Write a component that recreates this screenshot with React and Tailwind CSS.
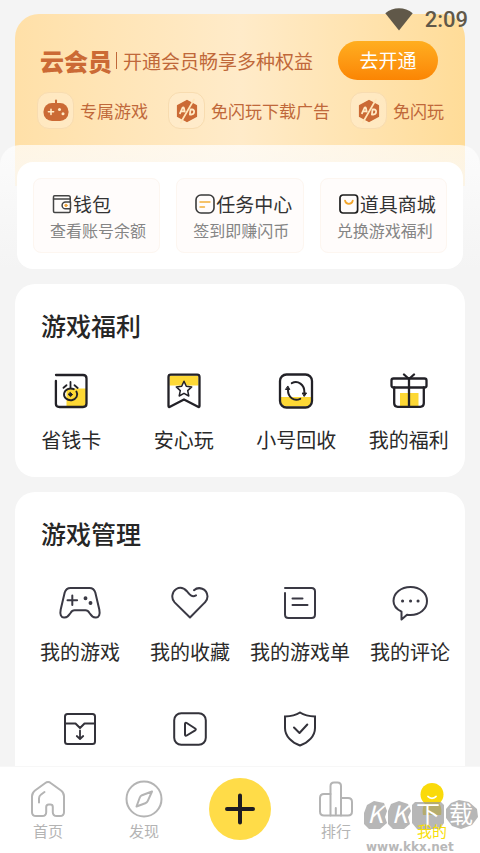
const CJK = "font-['Noto_Sans_CJK_SC',sans-serif]";

function Svg({ w, h, children, className = "", sw = 2 }) {
  return (
    <svg
      width={w}
      height={h}
      viewBox={`0 0 ${w} ${h}`}
      fill="none"
      stroke="currentColor"
      strokeWidth={sw}
      strokeLinecap="round"
      strokeLinejoin="round"
      aria-hidden="true"
      className={`block shrink-0 ${className}`}
    >
      {children}
    </svg>
  );
}

/* ---------- membership banner icons ---------- */

function PadSolid() {
  return (
    <Svg w={28} h={24} sw={1.6}>
      <path d="M14 1.5V5" stroke="#cb6a35" strokeWidth="2" />
      <rect x="1.5" y="4" width="25" height="18" rx="8.5" fill="#cb6a35" stroke="none" />
      <path d="M9 10.200v5.200M6.400 12.800h5.200" stroke="#ffe9c4" />
      <circle cx="17.500" cy="10.500" r="1.500" fill="#ffe9c4" stroke="none" />
      <circle cx="21" cy="14.800" r="1.500" fill="#ffe9c4" stroke="none" />
    </Svg>
  );
}

function NoAds() {
  return (
    <Svg w={24} h={26} sw={1.8}>
      <path
        d="M12 2.600 21.300 7.600v10.800L12 23.400 2.700 18.400V7.600z"
        fill="#cb6a35"
        stroke="#cb6a35"
        strokeWidth="1.600"
      />
      <path d="M5 15.300 7.400 10c.5-.9 1.200-.9 1.500 0l.8 3.600M6.200 13.400h3" stroke="#ffe9c4" />
      <path d="M15.500 11.500h1.500c3.200 0 2.600 5-.6 5h-1.500z" stroke="#ffe9c4" />
      <path d="M19 1.500 5.800 24.500" stroke="#ffe5b8" strokeWidth="1.700" />
    </Svg>
  );
}

/* ---------- shortcut icons ---------- */

function Wallet() {
  return (
    <Svg w={20} h={20} sw={1.5} className="text-[#444]">
      <path d="M18.200 8V3.500c0-1.200-.6-1.800-1.800-1.800H2.500c-.9 0-1 .5-1 1v14.500c0 .8.300 1.200 1.200 1.200h14.300c.8 0 1.200-.4 1.200-1.200V15" />
      <path d="M1.500 4.900h16.700M18.500 8h-5a3.300 3.300 0 0 0 0 6.800h5z" />
      <circle cx="14" cy="11.400" r="1.200" fill="#f0a53c" stroke="#f0a53c" strokeWidth="1" />
    </Svg>
  );
}

function Task() {
  return (
    <Svg w={20} h={20} sw={1.6} className="text-[#3a3a3a]">
      <rect x="1" y="1" width="18" height="18" rx="5" />
      <path d="M5 8h10M5 13h4.500" stroke="#f2ae3a" strokeWidth="1.400" />
    </Svg>
  );
}

function Bag() {
  return (
    <Svg w={20} h={20} sw={1.7} className="text-[#1d1d1d]">
      <rect x="1" y="1" width="17.600" height="18" rx="3" />
      <path d="M6 6.500c.8 4.500 7 4.500 7.800 0" stroke="#f2a52a" strokeWidth="1.700" />
    </Svg>
  );
}

/* ---------- welfare icons ---------- */

function SaveCard() {
  return (
    <Svg w={36} h={36} sw={2.3} className="text-[#222127]">
      <path d="M13.500 15.500H33v17.500H13.500z" fill="#fdd835" stroke="none" />
      <path d="M3 2h27c2.500 0 3.500 1 3.500 3.500v25c0 2.500-1 3.500-3.500 3.500H6.500C3.900 34 2.900 33 2.900 31V8" />
      <path d="M17.500 9v5.500M13.500 12.200l-3 2.600M21.500 12.200l3.200 2.800" strokeWidth="1.800" />
      <path d="M20.800 16.200a6.600 5.900 0 1 0 2.600 2.300" strokeWidth="1.900" />
      <path d="m17.500 19.600 2.100 2-2.100 2-2.100-2z" fill="currentColor" strokeWidth="1" />
    </Svg>
  );
}

function Bookmark() {
  return (
    <Svg w={36} h={36} sw={2.3} className="text-[#222127]">
      <path d="M3.500 2.500h29v10h-29z" fill="#fdd835" stroke="none" />
      <path d="M2.500 33V4c0-1.500.8-2.300 2.300-2.300h26.400c1.500 0 2.300.8 2.300 2.300v29c0 1-.8 1.200-1.500.8L18 26.500 4 33.800c-.8.400-1.500.1-1.500-.8z" />
      <path
        d="m18 8.300 2.300 5 5.400.6-4 3.700 1.100 5.400-4.800-2.700-4.800 2.700 1.100-5.400-4-3.700 5.400-.6z"
        fill="#fff"
        strokeWidth="1.500"
      />
    </Svg>
  );
}

function Recycle() {
  return (
    <Svg w={36} h={36} sw={2.3} className="text-[#222127]">
      <path d="M3 24h30v6l-3 3.500H6L3 30z" fill="#fdd835" stroke="none" />
      <rect x="2" y="1.500" width="32" height="33" rx="6.500" />
      <path d="M13.800 10.200c6-3.200 12.800 1.300 12.600 9.300" strokeWidth="2" />
      <path d="M22.200 25.800c-6.200 3-12.400-1.600-12.200-9" strokeWidth="2" />
      <path d="M24.600 20h4l-2.200 3.200zM7.800 16.500h4l-1.800-3.200z" fill="currentColor" strokeWidth="1" />
    </Svg>
  );
}

function Gift() {
  return (
    <Svg w={38} h={36} sw={2.3} className="text-[#222127]">
      <path d="M10 20h18.500v13H10z" fill="#fdd835" stroke="none" />
      <rect x="1.500" y="5.500" width="35" height="9" rx="2" />
      <path d="M4.200 14.500v15.800c0 2.500 1 3.500 3.500 3.500h22.600c2.500 0 3.500-1 3.500-3.500V14.500M19 6v27.500" />
      <path d="M14 1.500 19 6l5-4.500" />
    </Svg>
  );
}

/* ---------- management icons ---------- */

function Pad() {
  return (
    <Svg w={44} h={34} className="text-[#3a3944]">
      <path d="M12.500 2h19c3 0 4.800 1.300 5.800 4.500l4 17c1 5-.3 7.800-3.300 8-3.500.2-4.500-1.600-6.500-4.500-1-1.700-2-2.800-4-2.800h-11c-2 0-3 1.100-4 2.800-2 2.900-3 4.700-6.500 4.500-3-.2-4.300-3-3.300-8l4-17C7.700 3.300 9.500 2 12.500 2z" />
      <path d="M14.300 9.500v9.600M9.500 14.300h9.600" />
      <circle cx="27.500" cy="12.200" r="1.300" fill="currentColor" strokeWidth="1.300" />
      <circle cx="32.500" cy="17" r="1.300" fill="currentColor" strokeWidth="1.300" />
    </Svg>
  );
}

function Heart() {
  return (
    <Svg w={40} h={34} className="text-[#3a3944]">
      <path d="M24 4.200c4.500-4 13-2 13.500 6.200 0 2.600-.8 4.300-2.600 6L20 31.500 4.600 16.400C.8 12.400 2 5.600 6.300 3c4.200-2.400 7.800-.8 10.600 2.200 2.600 3 4.600 6.500 9.100 4.200" />
    </Svg>
  );
}

function ListIcon() {
  return (
    <Svg w={34} h={34} className="text-[#3a3944]">
      <path d="M2 2h26.500c2.500 0 3.500 1 3.500 3.500v23c0 2.500-1 3.500-3.500 3.500h-23C3 32 2 31 2 28.500V7" />
      <path d="M9.500 12.500h10M9.500 19h15" />
    </Svg>
  );
}

function Comment() {
  return (
    <Svg w={36} h={36} className="text-[#3a3944]">
      <path d="M9.500 34.500V26.700C4.500 24.200 1.500 20.500 1.500 16 1.500 8 9 2 18.500 2S35 8 35 16s-7.200 14-16.500 14c-1.300 0-2.400-.1-3.500-.3z" />
      <path d="M10.500 16h.1M18.500 16h.1M26 16h.1" strokeWidth="3" />
    </Svg>
  );
}

function Inbox() {
  return (
    <Svg w={34} h={34} className="text-[#33323a]">
      <rect x="2" y="2" width="30" height="30" rx="2.500" />
      <path d="M2 11.500h10.500l4.500 4.500 4.500-4.500H32" />
      <path d="M17 18.500v8M13.800 24l3.200 3 3.200-3" strokeWidth="1.800" />
    </Svg>
  );
}

function Play() {
  return (
    <Svg w={34} h={34} className="text-[#33323a]">
      <rect x="1.200" y="1.200" width="31.600" height="31.600" rx="7" />
      <path d="M12 12v10.500c0 1.200.8 1.600 1.700 1l8.500-5.200c.8-.6.800-1.300 0-1.800L13.700 11c-.9-.6-1.700-.2-1.700 1z" />
    </Svg>
  );
}

function Shield() {
  return (
    <Svg w={34} h={36} className="text-[#33323a]">
      <path
        d="M17 1.500C12.500 4.400 7.500 5.300 2 5.500V17c0 8 6.500 14.500 15 17.500C25.500 31.500 32 25 32 17V5.500C26.500 5.300 21.500 4.400 17 1.500z"
        strokeLinejoin="miter"
      />
      <path d="m11 16.500 5.500 5.500 7.800-8.500" />
    </Svg>
  );
}

/* ---------- tab bar icons ---------- */

function Home() {
  return (
    <Svg w={36} h={38} className="text-[#b4b4b4]">
      <path d="M15 3.200c2.200-1.600 4-1.600 6 0l10 7.300c2.300 1.700 3 3 3 5.700v16c0 2.600-1.300 3.800-4 3.800h-3.200c-2.700 0-4-1.200-4-3.800v-5.200c0-1.600-.8-2.400-2.500-2.400h-1.600c-1.600 0-2.500.8-2.500 2.500v5.100c0 2.600-1.300 3.800-4 3.800H6c-2.700 0-4-1.200-4-3.800v-16c0-2.700.8-4 3-5.700z" />
      <path d="M9 22.500v-4c0-1.800.4-2.800 1.800-3.800l3.700-2.700" />
    </Svg>
  );
}

function Compass() {
  return (
    <Svg w={38} h={38} className="text-[#b4b4b4]">
      <circle cx="19" cy="19" r="17.500" />
      <path d="M27 11.500 17 15.200c-1.200.5-1.800 1.200-2.200 2.300L11.500 26.500l8.800-3.300c1.300-.5 2-1.200 2.500-2.400z" />
    </Svg>
  );
}

function Rank() {
  return (
    <Svg w={36} h={38} className="text-[#b4b4b4]">
      <path d="M12.500 35.500V6c0-2.400 1-3.500 3.500-3.500h3.500C22 2.500 23 3.600 23 6v29.500" />
      <path d="M12.500 14H6c-2.700 0-4 1.300-4 4v13.500c0 2.700 1.300 4 4 4h24c2.700 0 4-1.300 4-4V22c0-2.700-1.300-4-4-4h-7M17.800 28v6" />
    </Svg>
  );
}

function Person() {
  return (
    <Svg w={36} h={38}>
      <path d="M12 22h12c3 3 4 8 3 13H9c-1-5 0-10 3-13z" fill="#fada0a" stroke="none" />
      <circle cx="18" cy="14.500" r="11.500" fill="#fada0a" stroke="none" />
      <path d="M14 16.500c2 2.400 6 2.400 8 0" stroke="#fff" strokeWidth="1.800" />
    </Svg>
  );
}

/* ---------- page parts ---------- */

function StatusBar() {
  return (
    <div className="absolute top-0 right-3 z-20 flex items-center gap-3 text-[#605849]">
      <svg width="28" height="24" viewBox="0 0 28 24" fill="currentColor" aria-hidden="true">
        <path d="M14 22.500.3 5.200C8-1.500 20-1.500 27.700 5.200z" />
      </svg>
      <span className="font-['Roboto',sans-serif] text-[22px] leading-10 font-medium">2:09</span>
    </div>
  );
}

const perks = [
  { icon: PadSolid, label: "专属游戏" },
  { icon: NoAds, label: "免闪玩下载广告" },
  { icon: NoAds, label: "免闪玩" },
];

function Banner() {
  return (
    <section className="mx-[15px] mt-3.5 h-[172px] overflow-hidden rounded-t-[24px] bg-linear-to-r from-[#ffe0a8] via-[#ffebc9] to-[#ffdc98] px-[22px] pt-[27px]">
      <div className="flex items-center whitespace-nowrap text-[#c0683a]">
        <h1 className="pl-[3px] text-[24px] leading-[39px] font-black text-[#cb6a35]">云会员</h1>
        <span className="ml-1 h-[17px] w-px bg-[#c0683a]" />
        <p className="ml-1.5 text-[19px] leading-[39px]">开通会员畅享多种权益</p>
        <button className="mr-[5px] ml-auto h-[39px] w-[100px] rounded-full bg-linear-to-b from-[#ffae1f] to-[#fb8503] text-[19px] text-white">
          去开通
        </button>
      </div>
      <ul className="mt-3 flex gap-5 whitespace-nowrap">
        {perks.map(({ icon: Icon, label }, i) => (
          <li key={i} className="flex shrink-0 items-center gap-1.5 text-[17px] text-[#c0683a]">
            <span className="flex size-[37px] items-center justify-center rounded-xl border border-[#f8dcb0] bg-[#ffedcf]/60">
              <Icon />
            </span>
            {label}
          </li>
        ))}
      </ul>
    </section>
  );
}

const shortcuts = [
  { icon: Wallet, title: "钱包", note: "查看账号余额" },
  { icon: Task, title: "任务中心", note: "签到即赚闪币" },
  { icon: Bag, title: "道具商城", note: "兑换游戏福利" },
];

function Shortcuts() {
  return (
    <section className="relative z-10 -mt-[41px] rounded-t-[20px] bg-linear-to-b from-white/70 to-[#f4f4f4] px-[17px] pt-[17px]">
      <div className="grid grid-cols-3 gap-4 rounded-2xl bg-white p-4">
        {shortcuts.map(({ icon: Icon, title, note }) => (
          <button
            key={title}
            className="h-[75px] rounded-lg border border-[#fdf6f0] bg-[#fffcfb] pl-4 text-left whitespace-nowrap"
          >
            <span className="flex items-center gap-px pl-0.5 text-[19px] leading-7 text-[#333]">
              <Icon />
              {title}
            </span>
            <span className="block text-[16px] leading-6 text-[#858585]">{note}</span>
          </button>
        ))}
      </div>
    </section>
  );
}

const welfare = [
  { icon: SaveCard, label: "省钱卡" },
  { icon: Bookmark, label: "安心玩" },
  { icon: Recycle, label: "小号回收" },
  { icon: Gift, label: "我的福利" },
];

const manage = [
  { icon: Pad, label: "我的游戏" },
  { icon: Heart, label: "我的收藏" },
  { icon: ListIcon, label: "我的游戏单" },
  { icon: Comment, label: "我的评论" },
  { icon: Inbox, name: "下载" },
  { icon: Play, name: "视频" },
  { icon: Shield, name: "安全" },
];

function Tile({ icon: Icon, label, name }) {
  return (
    <button aria-label={name} className="flex flex-col items-center whitespace-nowrap text-[#2a2a2a]">
      <span className="flex h-9 items-center">
        <Icon />
      </span>
      <span className="mt-[15px] h-8 text-[20px] leading-8">{label}</span>
    </button>
  );
}

function Panel({ title, items, gridClass }) {
  return (
    <section className="mx-[15px] mt-[15px] rounded-[20px] bg-white pt-[23px] pb-[21px]">
      <h2 className="pl-[26px] text-[25px] leading-9 font-medium text-[#262626]">{title}</h2>
      <div className={gridClass}>
        {items.map((item, i) => (
          <Tile key={i} {...item} />
        ))}
      </div>
    </section>
  );
}

function Tab({ icon: Icon, label, active }) {
  return (
    <a
      href="#"
      aria-current={active ? "page" : undefined}
      className={`relative flex flex-1 flex-col items-center ${active ? "text-[#f8de08]" : "text-[#b4b4b4]"}`}
    >
      <Icon />
      {active && <Watermark />}
      <span className="relative mt-[5px] text-[15px] leading-4">{label}</span>
    </a>
  );
}

function Watermark() {
  return (
    <span className="pointer-events-none absolute top-[19px] left-1/2 block w-[116px] -translate-x-[69px] text-white">
      <svg width="116" height="32" viewBox="0 0 116 32" fill="#999" opacity=".7" aria-hidden="true" className="block">
        <path d="M1 14 4 6l7-4 10 2 3 8-2 6 2 6-7 6H6l-5-5z" />
        <path d="M25 12l3-7 8-3 9 3 3 7-3 6 2 7-6 5H30l-5-5z" />
        <path d="M49 6l3-3h26l3 3v18l-4 6H54l-5-6z" />
        <path d="M83 10l5-6 8-3 10 2 8 7 1 8-6 8-11 4-9-3-6-8z" />
      </svg>
      <span className="absolute top-0 left-0 flex h-7 w-full items-center text-[24px] leading-7">
        <span className="w-6 text-center italic">K</span>
        <span className="w-[25px] text-center italic">K</span>
        <span className="w-8 text-center">下</span>
        <span className="w-[34px] text-center">载</span>
      </span>
      <span className="mt-2.5 block pl-[3px] font-['DejaVu_Sans',sans-serif] text-[12px] leading-3 font-bold text-[#b8b8b8]">
        www.kkx.net
      </span>
    </span>
  );
}

function TabBar() {
  return (
    <nav className="relative z-20 flex h-[87px] shrink-0 border-t border-[#f7f7f7] bg-white pt-[13px]">
      <Tab icon={Home} label="首页" />
      <Tab icon={Compass} label="发现" />
      <div className="flex flex-1 justify-center">
        <button
          aria-label="发布"
          className="-mt-0.5 flex size-[62px] items-center justify-center rounded-full bg-[#ffdc48] text-[#1e1c22]"
        >
          <Svg w={32} h={32} sw={4}>
            <path d="M16 2.500v27M3 16h26" />
          </Svg>
        </button>
      </div>
      <Tab icon={Rank} label="排行" />
      <Tab icon={Person} label="我的" active />
    </nav>
  );
}

export default function App() {
  return (
    <div className={`relative flex h-screen flex-col overflow-hidden bg-[#f4f4f4] ${CJK}`}>
      <StatusBar />
      <main className="min-h-0 flex-1 overflow-hidden">
        <Banner />
        <Shortcuts />
        <Panel title="游戏福利" items={welfare} gridClass="mt-[30px] grid grid-cols-4" />
        <Panel title="游戏管理" items={manage} gridClass="mt-[34px] grid grid-cols-4 gap-y-[43px] pl-2.5" />
      </main>
      <TabBar />
    </div>
  );
}
